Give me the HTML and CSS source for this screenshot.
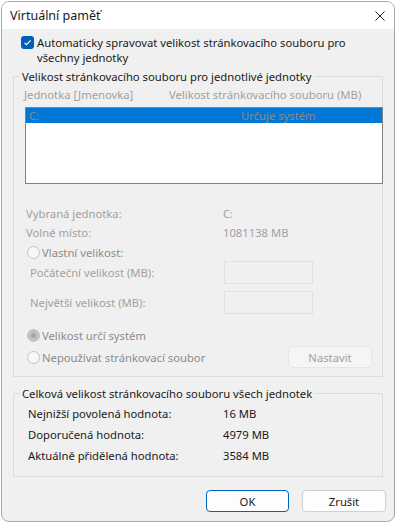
FILE: index.html
```html
<!DOCTYPE html>
<html lang="cs">
<head>
    <meta charset="UTF-8">
    <meta name="viewport" content="width=device-width, initial-scale=1.0">
    <title>Virtuální paměť</title>
    <link rel="stylesheet" href="styles.css">
</head>
<body>
    <div class="window">
        <div class="titlebar">
            <span class="title">Virtuální paměť</span>
            <svg class="close" width="10" height="10" viewBox="0 0 10 10">
                <path d="M0.5 0.5 L9.5 9.5 M9.5 0.5 L0.5 9.5" stroke="#1a1a1a" stroke-width="1" fill="none"/>
            </svg>
        </div>

        <div class="content">
            <label class="auto">
                <span class="checkbox">
                    <svg width="13" height="13" viewBox="0 0 13 13">
                        <path d="M3.5 6.8 L5.5 8.7 L9.6 4.4" stroke="#fff" stroke-width="1.1" fill="none"/>
                    </svg>
                </span>
                <span class="auto-text">Automaticky spravovat velikost stránkovacího souboru pro<br>všechny jednotky</span>
            </label>

            <fieldset class="group drives">
                <legend>Velikost stránkovacího souboru pro jednotlivé jednotky</legend>

                <div class="list-head">
                    <span>Jednotka [Jmenovka]</span>
                    <span>Velikost stránkovacího souboru (MB)</span>
                </div>

                <div class="listbox">
                    <div class="list-row selected">
                        <span>C:</span>
                        <span>Určuje systém</span>
                    </div>
                </div>

                <div class="info">
                    <span>Vybraná jednotka:</span><span>C:</span>
                    <span>Volné místo:</span><span>1081138 MB</span>
                </div>

                <div class="radio-row custom">
                    <span class="radio"></span>
                    <span>Vlastní velikost:</span>
                </div>

                <div class="size-row first">
                    <span>Počáteční velikost (MB):</span>
                    <span class="field"></span>
                </div>
                <div class="size-row">
                    <span>Největší velikost (MB):</span>
                    <span class="field"></span>
                </div>

                <div class="radio-row system">
                    <span class="radio checked"></span>
                    <span>Velikost určí systém</span>
                </div>

                <div class="radio-row none">
                    <span class="radio-label">
                        <span class="radio"></span>
                        <span>Nepoužívat stránkovací soubor</span>
                    </span>
                    <span class="btn disabled">Nastavit</span>
                </div>
            </fieldset>

            <fieldset class="group totals">
                <legend>Celková velikost stránkovacího souboru všech jednotek</legend>
                <div class="totals-grid">
                    <span>Nejnižší povolená hodnota:</span><span>16 MB</span>
                    <span>Doporučená hodnota:</span><span>4979 MB</span>
                    <span>Aktuálně přidělená hodnota:</span><span>3584 MB</span>
                </div>
            </fieldset>

            <div class="actions">
                <span class="btn primary">OK</span>
                <span class="btn">Zrušit</span>
            </div>
        </div>
    </div>
</body>
</html>
```

FILE: styles.css
```css
:root {
    --bg: #f0f0f0;
    --text: #1a1a1a;
    --disabled: #a0a0a0;
    --radio-text: #8c8c8c;
    --group-border: #dcdcdc;
    --accent: #005fb8;
    --select: #0078d7;
}

* {
    box-sizing: border-box;
}

body {
    margin: 0;
    background: #ffffff;
    font-family: "Noto Sans", "Open Sans", sans-serif;
    font-size: 11.25px;
    color: var(--text);
}

.window {
    margin: 1px 1px 0;
    height: 521px;
    border: 1px solid #a9a9a9;
    border-radius: 8px;
    background: var(--bg);
    overflow: hidden;
}

.titlebar {
    height: 27px;
    background: #ffffff;
    display: flex;
    align-items: center;
    justify-content: space-between;
    padding: 0 9px 0 8px;
    font-size: 12.5px;
}

.content {
    padding: 0 11px;
}

/* checkbox */
.auto {
    display: flex;
    align-items: flex-start;
    gap: 3px;
    margin: 6px 0 0 8px;
    line-height: 15px;
}

.checkbox {
    width: 13px;
    height: 13px;
    margin-top: 1px;
    border-radius: 3px;
    background: var(--accent);
    flex: none;
}

.checkbox svg {
    display: block;
}

/* group boxes */
.group {
    margin: 4px 0 0;
    padding: 0 0 8px;
    border: 1px solid var(--group-border);
    min-width: 0;
}

.group legend {
    margin-left: 6px;
    padding: 0 2px;
    line-height: 15px;
}

.list-head {
    display: grid;
    grid-template-columns: 145px 1fr;
    padding: 3px 0 0 10px;
    line-height: 15px;
    color: var(--disabled);
}

.listbox {
    margin: 5px -1px 0 11px;
    height: 77px;
    border: 1px solid #828282;
    background: #ffffff;
}

.list-row {
    display: grid;
    grid-template-columns: 212px 1fr;
    height: 15px;
    line-height: 15px;
    padding-left: 3px;
    color: #8a8a8a;
}

.list-row.selected {
    background: var(--select);
}

.info {
    display: grid;
    grid-template-columns: 197px 1fr;
    grid-auto-rows: 19px;
    align-items: center;
    margin-top: 20px;
    padding-left: 12px;
    color: var(--disabled);
}

.radio-row {
    display: flex;
    align-items: center;
    gap: 2px;
    height: 18px;
    padding-left: 13px;
    color: var(--radio-text);
}

.radio-row.custom {
    margin-top: 1px;
}

.radio-row.system {
    margin-top: 12px;
}

.radio-row.none {
    height: 22px;
    margin-top: 2px;
    justify-content: space-between;
    padding-right: 10px;
}

.radio-label {
    display: flex;
    align-items: center;
    gap: 2px;
}

.radio {
    width: 13px;
    height: 13px;
    border-radius: 50%;
    border: 1px solid #c4c4c4;
    background: #f7f7f7;
    flex: none;
}

.radio.checked {
    background: #c2c2c2;
    border-color: #c2c2c2;
    display: flex;
    align-items: center;
    justify-content: center;
}

.radio.checked::after {
    content: "";
    width: 5px;
    height: 5px;
    border-radius: 50%;
    background: #a6a6a6;
}

.size-row {
    display: grid;
    grid-template-columns: 194px 89px;
    align-items: center;
    height: 23px;
    margin-top: 7px;
    padding-left: 16px;
    color: var(--disabled);
}

.size-row.first {
    margin-top: 0;
}

.field {
    height: 23px;
    border: 1px solid #e0e0e0;
    background: var(--bg);
}

.totals-grid {
    display: grid;
    grid-template-columns: 195px 1fr;
    grid-auto-rows: 21px;
    align-items: center;
    padding: 2px 0 2px 14px;
}

.group.totals {
    margin-top: 9px;
}

/* buttons */
.btn {
    display: inline-flex;
    align-items: center;
    justify-content: center;
    width: 84px;
    height: 22px;
    border: 1px solid #d0d0d0;
    border-radius: 4px;
    background: #fdfdfd;
}

.btn.disabled {
    background: #f5f5f5;
    border-color: #e5e5e5;
    color: var(--disabled);
}

.btn.primary {
    width: 83px;
    border-color: #0067c0;
}

.actions {
    display: flex;
    justify-content: flex-end;
    gap: 13px;
    margin: 13px -3px 0 0;
}
```
